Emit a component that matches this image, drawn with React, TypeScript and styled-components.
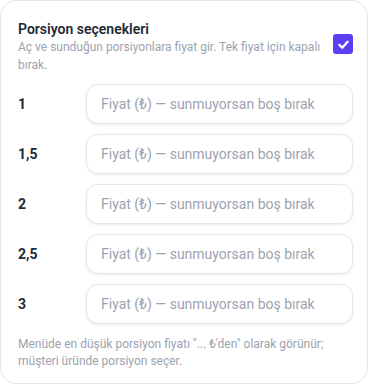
import React from "react";
import styled, { createGlobalStyle } from "styled-components";

const Global = createGlobalStyle`
  html, body { margin: 0; padding: 0; background: #ffffff; }
  body { font-family: "Roboto", "Noto Sans", sans-serif; }
  * { box-sizing: border-box; }
`;

const Card = styled.section`
  width: 368px;
  height: 384px;
  border: 1px solid #e5e7eb;
  border-radius: 16px;
  background: #fff;
  padding: 18px 14px 16px 17px;
  display: flex;
  flex-direction: column;
`;

const Header = styled.div`
  display: flex;
  align-items: flex-start;
  justify-content: space-between;
  gap: 12px;
`;

const HeaderText = styled.div`
  display: flex;
  flex-direction: column;
`;

const Title = styled.h3`
  margin: 0;
  font-size: 14px;
  font-weight: 600;
  color: #1f2937;
  line-height: 20px;
`;

const Sub = styled.p`
  margin: 0;
  font-size: 12px;
  color: #9ca3af;
  line-height: 17.5px;
`;

const Check = styled.span`
  flex: none;
  width: 20px;
  height: 20px;
  margin-top: 15px;
  border-radius: 3px;
  background: #5b3ff5;
  display: flex;
  align-items: center;
  justify-content: center;
`;

const Rows = styled.div`
  display: flex;
  flex-direction: column;
  gap: 10px;
  margin-top: 10px;
`;

const Row = styled.label`
  display: grid;
  grid-template-columns: 68px 1fr;
  align-items: center;
`;

const Label = styled.span`
  font-size: 14px;
  font-weight: 700;
  color: #1f2937;
`;

const Input = styled.input`
  height: 40px;
  width: 100%;
  border: 1px solid #e5e7eb;
  border-radius: 12px;
  padding: 0 14px;
  font-family: inherit;
  font-size: 14px;
  color: #1f2937;
  background: #fff;
  box-shadow: 0 1px 3px rgba(0, 0, 0, 0.08);
  outline: none;
  &::placeholder { color: #9ca3af; }
`;

const Foot = styled.p`
  margin: 12px 0 0;
  font-size: 12px;
  line-height: 17px;
  color: #9ca3af;
`;

const portions = ["1", "1,5", "2", "2,5", "3"];

export default function App() {
  return (
    <>
      <Global />
      <Card>
        <Header>
          <HeaderText>
            <Title>Porsiyon seçenekleri</Title>
            <Sub>Aç ve sunduğun porsiyonlara fiyat gir. Tek fiyat için kapalı bırak.</Sub>
          </HeaderText>
          <Check>
            <svg width="13" height="13" viewBox="0 0 16 16">
              <path d="M3 8.5 L6.5 12 L13 4.5" fill="none" stroke="#fff" strokeWidth="2.8" strokeLinecap="round" strokeLinejoin="round" />
            </svg>
          </Check>
        </Header>
        <Rows>
          {portions.map((p) => (
            <Row key={p}>
              <Label>{p}</Label>
              <Input placeholder="Fiyat (₺) — sunmuyorsan boş bırak" />
            </Row>
          ))}
        </Rows>
        <Foot>Menüde en düşük porsiyon fiyatı "... ₺'den" olarak görünür; müşteri üründe porsiyon seçer.</Foot>
      </Card>
    </>
  );
}
